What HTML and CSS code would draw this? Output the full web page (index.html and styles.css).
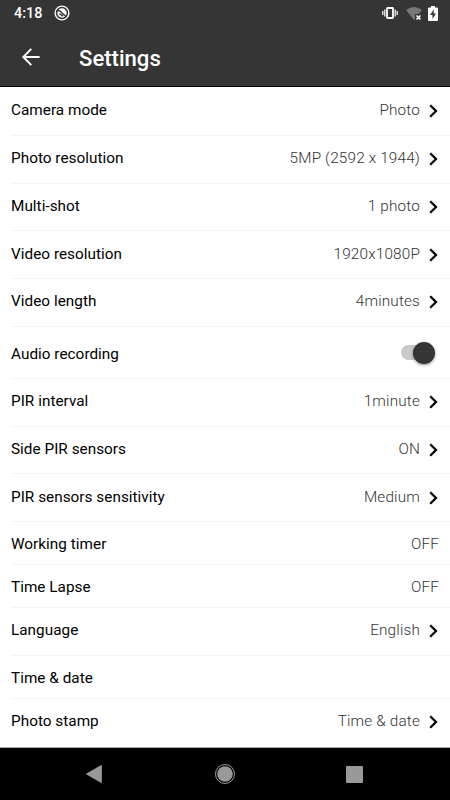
FILE: index.html
```
<!DOCTYPE html>
<html lang="en">
<head>
<meta charset="utf-8">
<title>Settings</title>
<link rel="stylesheet" href="styles.css">
</head>
<body>
<svg class="defs" width="0" height="0"><symbol id="chev" viewBox="0 0 10 14"><path d="M1.200 1.200 7 7 1.200 12.800" fill="none" stroke="#000" stroke-width="2.300"/></symbol></svg>
<header class="top">
  <div class="status">
    <span class="clock">4:18</span>
    <svg class="dnd" width="16" height="16" viewBox="0 0 16 16"><circle cx="8" cy="8" r="6.9" fill="none" stroke="#fff" stroke-width="1.4"/><circle cx="8" cy="8" r="4.7" fill="#fff"/><path d="M3.2 6.2C5 5 7 6.2 8 8l3.8 3.6M5.5 8.5l3.3 2.6" fill="none" stroke="#353535" stroke-width="1.4"/></svg>
    <span class="grow"></span>
    <svg class="vibrate" width="16" height="12" viewBox="0 0 16 12"><rect x="5" y="1" width="6" height="10" rx=".5" fill="none" stroke="#fff" stroke-width="1.8"/><path d="M2.8 2.5v7M13.2 2.5v7M.8 4v4M15.2 4v4" stroke="#fff" stroke-width="1.2"/></svg>
    <svg class="wifi" width="17" height="14" viewBox="0 0 17 14"><path d="M0 3Q8-3 16 3L8 13Z" fill="#777"/><path d="M9 7h7v7H9z" fill="#353535"/><path d="m10.5 8.5 4 4m0-4-4 4" stroke="#fff" stroke-width="1.6"/></svg>
    <svg class="battery" width="10" height="15" viewBox="0 0 10 15"><path d="M3 0h4v1.5h2q1 0 1 1V14q0 1-1 1H1q-1 0-1-1V2.500q0-1 1-1h2z" fill="#fff"/><path d="M5.700 3.500 2 9h2.500v4L8 7.500H5.700z" fill="#353535"/></svg>
  </div>
  <div class="bar">
    <svg class="back" width="18" height="18" viewBox="0 0 18 18"><path d="M17.600 9H1.500M9.300 .9 1.300 9l8 8.100" fill="none" stroke="#fff" stroke-width="1.9"/></svg>
    <h1>Settings</h1>
  </div>
</header>
<main class="list">
  <div class="row"><span>Camera mode</span><span class="value">Photo</span><svg class="chev"><use href="#chev"/></svg></div>
  <div class="row"><span>Photo resolution</span><span class="value">5MP (2592 x 1944)</span><svg class="chev"><use href="#chev"/></svg></div>
  <div class="row"><span>Multi-shot</span><span class="value">1 photo</span><svg class="chev"><use href="#chev"/></svg></div>
  <div class="row"><span>Video resolution</span><span class="value">1920x1080P</span><svg class="chev"><use href="#chev"/></svg></div>
  <div class="row"><span>Video length</span><span class="value">4minutes</span><svg class="chev"><use href="#chev"/></svg></div>
  <div class="row audio"><span>Audio recording</span><span class="switch"><i></i></span></div>
  <div class="row"><span>PIR interval</span><span class="value">1minute</span><svg class="chev"><use href="#chev"/></svg></div>
  <div class="row"><span>Side PIR sensors</span><span class="value">ON</span><svg class="chev"><use href="#chev"/></svg></div>
  <div class="row"><span>PIR sensors sensitivity</span><span class="value">Medium</span><svg class="chev"><use href="#chev"/></svg></div>
  <div class="row short"><span>Working timer</span><span class="value">OFF</span></div>
  <div class="row short"><span>Time Lapse</span><span class="value">OFF</span></div>
  <div class="row"><span>Language</span><span class="value">English</span><svg class="chev"><use href="#chev"/></svg></div>
  <div class="row short"><span>Time &amp; date</span></div>
  <div class="row last"><span>Photo stamp</span><span class="value">Time &amp; date</span><svg class="chev"><use href="#chev"/></svg></div>
</main>
<nav class="nav">
  <svg width="16" height="18" viewBox="0 0 16 18"><path d="M15.300 .5v17L.5 9z" fill="#999" stroke="#999" stroke-linejoin="round"/></svg>
  <svg class="home" width="20" height="20" viewBox="0 0 20 20"><circle cx="10" cy="10" r="9.500" fill="none" stroke="#999"/><circle cx="10" cy="10" r="7.800" fill="#999"/></svg>
  <svg width="17" height="17" viewBox="0 0 17 17"><rect width="17" height="17" rx="1" fill="#999"/></svg>
</nav>
</body>
</html>
```
FILE: styles.css
```
* { box-sizing: border-box; }
body {
  margin: 0;
  width: 450px;
  height: 800px;
  overflow: hidden;
  display: flex;
  flex-direction: column;
  background: #fff;
  font-family: Roboto, "Liberation Sans", sans-serif;
}
svg { display: block; flex: none; }
.defs { position: absolute; }
.top {
  height: 87px;
  flex: none;
  background: #353535;
  border-bottom: 1px solid #000;
  color: #fff;
}
.status {
  height: 27px;
  display: flex;
  align-items: center;
  padding: 0 12.500px 0 14px;
}
.dnd { margin-top: -1px; }
.clock { width: 39.500px; padding-top: 1px; font-size: 14.400px; font-weight: 500; line-height: 26px; }
.grow { flex: 1; }
.vibrate { margin-top: -1px; }
.wifi { margin: 0 5px 0 8px; }
.battery { margin-top: -1px; }
.bar { height: 60px; display: flex; align-items: center; padding-left: 22px; }
h1 {
  margin: 2px 0 0 39px;
  font-size: 22.100px;
  font-weight: 500;
  line-height: 30px;
}
.list { height: 661px; flex: none; border-bottom: 1px solid #aaa; overflow: hidden; }
.row {
  height: 47.8px;
  margin-left: 11px;
  padding: 12.200px 11px 0 0;
  display: flex;
  align-items: flex-start;
  border-bottom: 1px solid #f4f4f4;
  font-size: 15.310px;
  line-height: 20px;
  letter-spacing: .03px;
  color: #000;
}
.row:first-child { height: 48.800px; padding-top: 13px; }
.short { height: 43px; }
.audio { height: 51.800px; padding-top: 17px; }
.last { border: 0; }
.value { margin-left: auto; font-weight: 300; letter-spacing: .17px; color: #333; }
.chev { width: 10px; height: 14px; margin: 4px 0 0 9px; }
.switch {
  position: relative;
  width: 34px;
  height: 22px;
  margin: -2px 4px 0 auto;
}
.switch::before {
  content: "";
  position: absolute;
  left: 0;
  top: 3px;
  width: 30px;
  height: 15px;
  border-radius: 8px;
  background: #c9c9c9;
}
.switch i {
  position: relative;
  display: block;
  width: 22px;
  height: 22px;
  margin: 0 0 0 auto;
  border-radius: 50%;
  background: #353535;
  box-shadow: 0 1px 3px rgba(0,0,0,.45);
}
.nav {
  height: 52px;
  flex: none;
  background: #000;
  display: flex;
  justify-content: space-between;
  align-items: center;
  padding: 0 87px 0 86px;
}
.home { margin-left: 1px; }
```
